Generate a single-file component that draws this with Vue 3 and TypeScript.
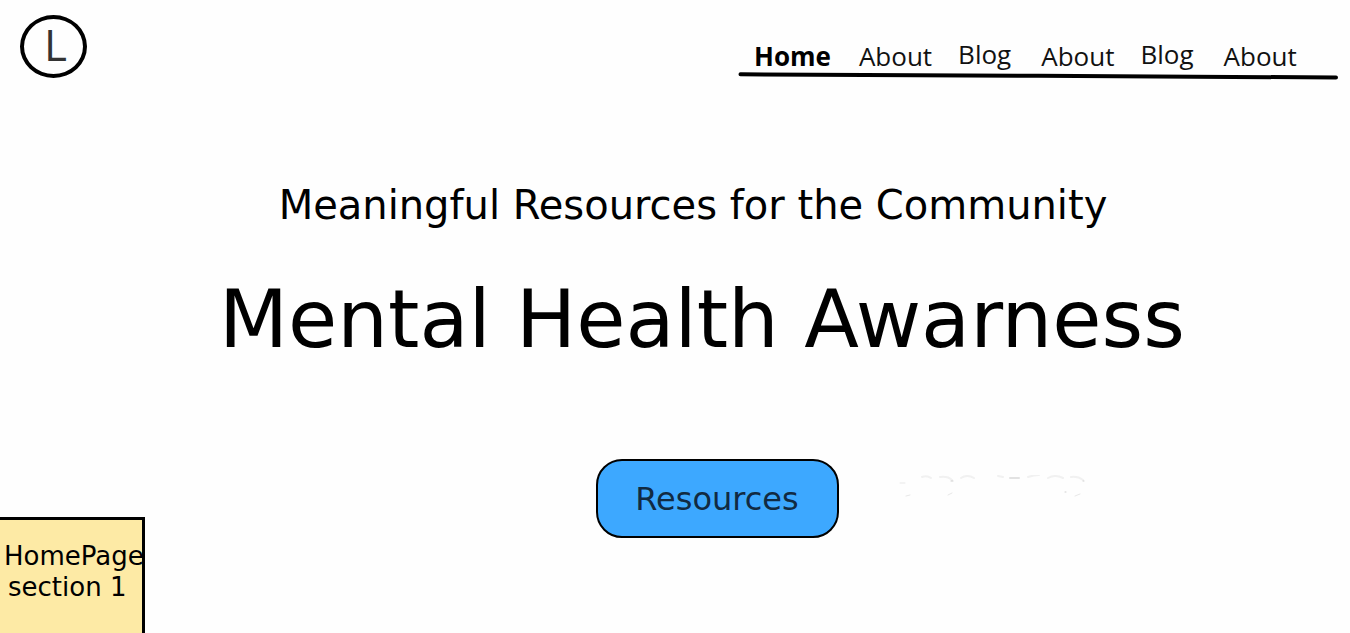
<script setup lang="ts">
interface NavItem {
  label: string
  href: string
  current?: boolean
  raised?: boolean
}

const navItems: NavItem[] = [
  { label: 'Home', href: '#home', current: true },
  { label: 'About', href: '#about' },
  { label: 'Blog', href: '#blog', raised: true },
  { label: 'About', href: '#about-team' },
  { label: 'Blog', href: '#blog-news', raised: true },
  { label: 'About', href: '#about-contact' },
]
</script>

<template>
  <div class="page">
    <header class="header">
      <a class="logo" href="#home">L</a>
      <nav class="nav" aria-label="Main">
        <ul class="nav-list">
          <li v-for="item in navItems" :key="item.href">
            <a
              :href="item.href"
              class="nav-link"
              :class="{ current: item.current, raised: item.raised }"
              :aria-current="item.current ? 'page' : undefined"
            >{{ item.label }}</a>
          </li>
        </ul>
        <svg class="nav-rule" viewBox="0 0 600 8" preserveAspectRatio="none" aria-hidden="true">
          <path d="M2.5 2.3 L300 3.8 L598 5.5" fill="none" stroke="#000" stroke-width="4" stroke-linecap="round" />
        </svg>
      </nav>
    </header>

    <main class="hero">
      <p class="tagline">Meaningful Resources for the Community</p>
      <h1 class="title">Mental Health Awarness</h1>
      <div class="actions">
        <button class="cta" type="button">Resources</button>
        <svg class="smudges" viewBox="0 0 190 24" aria-hidden="true">
          <g fill="none" stroke-linecap="round">
            <path d="M1 8h5M7 21l4-1M49 20l4-2M176 21l5-2" stroke="#e8e8e8" />
            <path d="M23 2q5-2 9 1M41 2q8-1 12 3M62 3q6-4 13 0M99 1l5 1M129 2q6-2 11-2M149 3q7-4 15 0M172 2q7-1 12 3" stroke="#f1f1f1" stroke-width="2" />
            <path d="M111 3h9" stroke="#e2e2e2" stroke-width="2" />
            <path d="M166 17h1M52 6h2M184 6h1" stroke="#cfcfcf" />
          </g>
        </svg>
      </div>
    </main>

    <aside class="note">
      <span class="note-line">HomePage</span>
      <span class="note-line indented">section 1</span>
    </aside>
  </div>
</template>

<style>
body {
  margin: 0;
  background: #fefefe;
}
</style>

<style scoped>
.page {
  display: grid;
  grid-template-columns: minmax(0, 1fr);
  grid-template-rows: auto 1fr;
  min-height: 100vh;
  color: #000;
  font-family: Verdana, "DejaVu Sans", sans-serif;
}

.header {
  display: flex;
  justify-content: space-between;
  align-items: flex-start;
  padding: 15px 12px 0 20px;
}

.logo {
  display: flex;
  align-items: center;
  justify-content: center;
  box-sizing: border-box;
  width: 67px;
  height: 63px;
  padding: 0 0 6px 4px;
  border: 4px solid #000;
  border-radius: 50%;
  color: #333;
  font: 400 44px/48px "Segoe UI", "Open Sans", sans-serif;
  text-decoration: none;
}

.nav {
  width: 600px;
  padding-top: 24px;
  font-family: "Segoe UI", "Open Sans", sans-serif;
}

.nav-list {
  display: flex;
  gap: 28px;
  margin: 0;
  padding: 0 0 0 16px;
  list-style: none;
}

.nav-link {
  display: block;
  color: #111;
  font-size: 26px;
  line-height: 35px;
  text-decoration: none;
}

.nav-link.current {
  color: #000;
  font-weight: 700;
}

.nav-link.raised {
  margin: -2px 2px 0 -2px;
}

.nav-rule {
  display: block;
  width: 100%;
  height: 8px;
  margin-top: -2px;
}

.hero {
  display: flex;
  grid-area: 2 / 1;
  flex-direction: column;
  align-items: center;
  padding: 101px 0 0 36px;
}

.tagline {
  margin: 0;
  font-size: 40px;
  line-height: 48px;
}

.title {
  margin: 43px 0 0 18px;
  font-size: 80px;
  font-weight: 400;
  line-height: 96px;
}

.actions {
  display: flex;
  align-items: flex-start;
  gap: 60px;
  margin: 91px 0 0 298px;
}

.cta {
  box-sizing: border-box;
  width: 243px;
  height: 79px;
  padding: 0;
  border: 2px solid #000;
  border-radius: 26px;
  background: #3da8ff;
  color: #112a42;
  font: 400 32px/40px Verdana, "DejaVu Sans", sans-serif;
}

.smudges {
  width: 190px;
  height: 24px;
  margin-top: 16px;
}

.note {
  box-sizing: border-box;
  grid-area: 2 / 1;
  align-self: end;
  width: 145px;
  height: 116px;
  padding: 21px 0 0 4px;
  overflow: hidden;
  border-top: 3px solid #000;
  border-right: 3px solid #000;
  background: #fdeaa5;
  font-size: 26px;
  line-height: 31px;
  white-space: nowrap;
}

.note-line {
  display: block;
}

.note-line.indented {
  padding-left: 4px;
}
</style>
